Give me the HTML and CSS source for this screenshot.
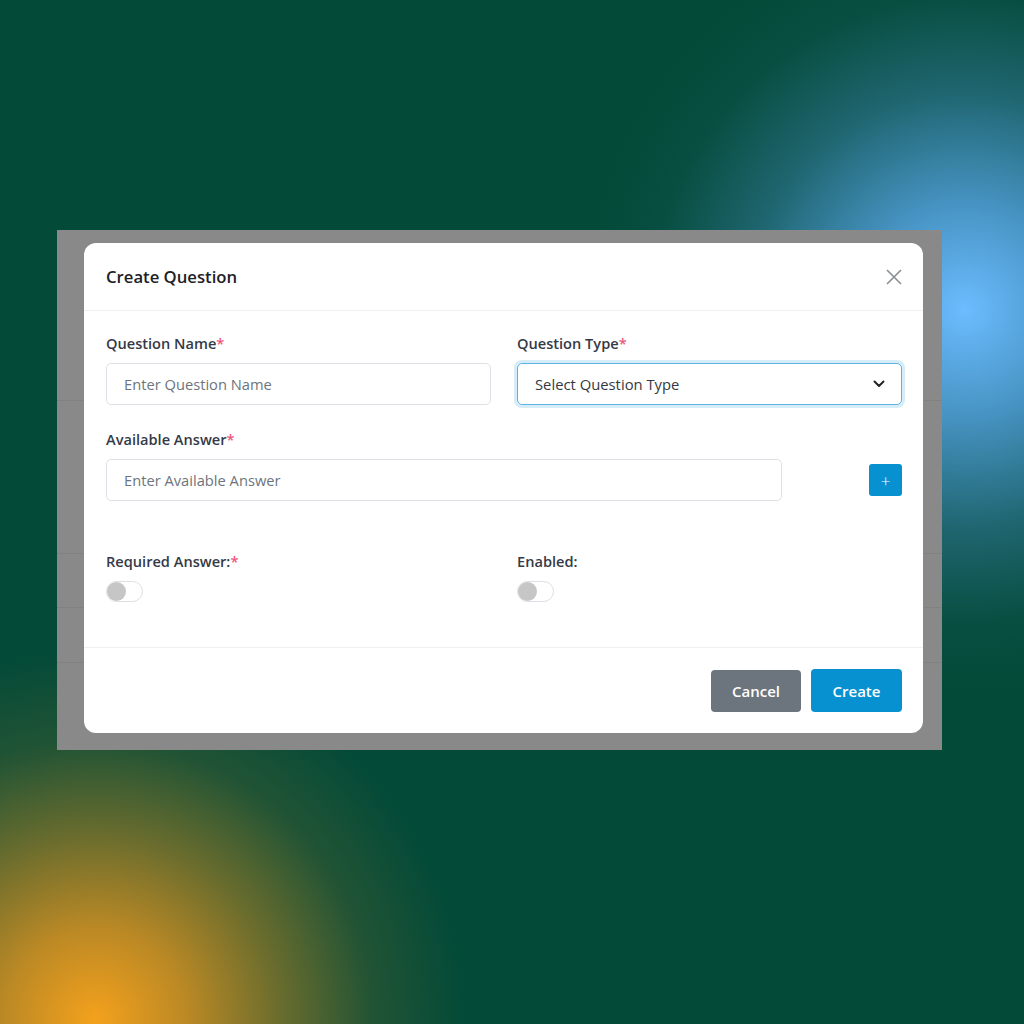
FILE: index.html
```html
<!DOCTYPE html>
<html lang="en">
<head>
    <meta charset="UTF-8">
    <meta name="viewport" content="width=device-width, initial-scale=1.0">
    <title>Create Question</title>
    <link rel="stylesheet" href="styles.css">
</head>
<body>
<div class="stage">
    <div class="backdrop">
        <div class="modal">
            <header class="modal-header">
                <h1>Create Question</h1>
                <button type="button" class="close" aria-label="Close">
                    <svg width="18" height="18" viewBox="0 0 18 18"><path d="M2 2 L16 16 M16 2 L2 16" stroke="#8a8f94" stroke-width="1.6" fill="none"/></svg>
                </button>
            </header>

            <form class="modal-body">
                <div class="row two">
                    <div class="field">
                        <label>Question Name<span class="req">*</span></label>
                        <input type="text" class="input" placeholder="Enter Question Name">
                    </div>
                    <div class="field">
                        <label>Question Type<span class="req">*</span></label>
                        <div class="select">
                            <span>Select Question Type</span>
                            <svg width="12" height="8" viewBox="0 0 12 8"><path d="M1.5 1.5 L6 6 L10.5 1.5" stroke="#212529" stroke-width="2" fill="none" stroke-linecap="round" stroke-linejoin="round"/></svg>
                        </div>
                    </div>
                </div>

                <div class="field">
                    <label>Available Answer<span class="req">*</span></label>
                    <div class="answer-row">
                        <input type="text" class="input answer" placeholder="Enter Available Answer">
                        <button type="button" class="add">+</button>
                    </div>
                </div>

                <div class="row two toggles">
                    <div class="field">
                        <label>Required Answer:<span class="req">*</span></label>
                        <span class="switch"><span class="knob"></span></span>
                    </div>
                    <div class="field">
                        <label>Enabled:</label>
                        <span class="switch"><span class="knob"></span></span>
                    </div>
                </div>
            </form>

            <footer class="modal-footer">
                <button type="button" class="btn cancel">Cancel</button>
                <button type="button" class="btn create">Create</button>
            </footer>
        </div>
    </div>
</div>
</body>
</html>
```

FILE: styles.css
```css
* {
    box-sizing: border-box;
}

body {
    margin: 0;
    font-family: "Open Sans", "Noto Sans", Arial, sans-serif;
}

.stage {
    width: 1024px;
    height: 1024px;
    padding: 230px 82px 0 57px;
    background-color: #034a38;
    background-image:
        radial-gradient(circle 380px at 965px 310px, rgba(108, 188, 255, 1) 0, rgba(78, 155, 210, 0.9) 28%, rgba(45, 115, 140, 0.65) 58%, rgba(20, 90, 90, 0.3) 82%, rgba(3, 74, 56, 0) 100%),
        radial-gradient(circle 370px at 95px 1020px, rgba(244, 161, 28, 1) 0, rgba(196, 140, 36, 0.95) 25%, rgba(140, 120, 42, 0.75) 50%, rgba(70, 95, 48, 0.45) 75%, rgba(3, 74, 56, 0) 100%);
}

.backdrop {
    width: 885px;
    height: 520px;
    padding: 13px 19px 17px 27px;
    background-color: #898989;
    background-image:
        linear-gradient(#818181, #818181),
        linear-gradient(#818181, #818181),
        linear-gradient(#818181, #818181),
        linear-gradient(#818181, #818181);
    background-size: 100% 1px;
    background-repeat: no-repeat;
    background-position: 0 170px, 0 323px, 0 377px, 0 432px;
}

.modal {
    background: #fff;
    border-radius: 12px;
    height: 490px;
    display: flex;
    flex-direction: column;
}

.modal-header {
    height: 68px;
    display: flex;
    align-items: center;
    justify-content: space-between;
    padding: 0 20px 0 22px;
    border-bottom: 1px solid #eef0f2;
}

.modal-header h1 {
    margin: 0;
    font-size: 16.7px;
    font-weight: 600;
    color: #1d2125;
}

.close {
    border: none;
    background: none;
    padding: 0;
    width: 18px;
    height: 18px;
    display: flex;
}

.modal-body {
    flex: 1;
    padding: 23px 21px 0 22px;
    display: flex;
    flex-direction: column;
    gap: 25px;
}

.row.two {
    display: grid;
    grid-template-columns: 385px 385px;
    gap: 26px;
}

.row.toggles {
    margin-top: 26px;
}

.field {
    display: flex;
    flex-direction: column;
    gap: 10px;
}

.field label {
    font-size: 14.6px;
    font-weight: 600;
    color: #343a47;
    line-height: 19px;
}

.req {
    color: #f0567a;
}

.input {
    height: 42px;
    width: 100%;
    padding: 0 17px;
    border: 1px solid #dee2e6;
    border-radius: 5px;
    font-family: inherit;
    font-size: 14.7px;
    color: #343a40;
}

.input::placeholder {
    color: #6c757d;
}

.select {
    height: 42px;
    padding: 0 16px 0 17px;
    border: 1px solid #5db3e2;
    border-radius: 5px;
    box-shadow: 0 0 0 3px rgba(93, 179, 226, 0.25);
    display: flex;
    align-items: center;
    justify-content: space-between;
    font-size: 14.8px;
    color: #343a40;
}

.answer-row {
    display: flex;
    align-items: center;
}

.input.answer {
    width: 676px;
}

.add {
    margin-left: auto;
    width: 33px;
    height: 32px;
    border: none;
    border-radius: 3px;
    background: #0891d1;
    color: #fff;
    font-family: inherit;
    font-size: 17px;
    font-weight: 300;
    line-height: 1;
    padding: 0;
}

.switch {
    position: relative;
    width: 37px;
    height: 21px;
    border: 1px solid #dcdfe3;
    border-radius: 11px;
    background: #fff;
}

.knob {
    position: absolute;
    left: 0;
    top: 0;
    width: 19px;
    height: 19px;
    border-radius: 50%;
    background: #c6c6c6;
}

.modal-footer {
    height: 86px;
    border-top: 1px solid #eef0f2;
    display: flex;
    align-items: center;
    justify-content: flex-end;
    gap: 10px;
    padding: 0 21px 0 0;
}

.btn {
    height: 42px;
    border: none;
    border-radius: 4px;
    color: #fff;
    font-family: inherit;
    font-size: 15px;
    font-weight: 600;
}

.cancel {
    width: 90px;
    background: #6c757d;
}

.create {
    width: 91px;
    height: 43px;
    background: #0891d1;
}
```
